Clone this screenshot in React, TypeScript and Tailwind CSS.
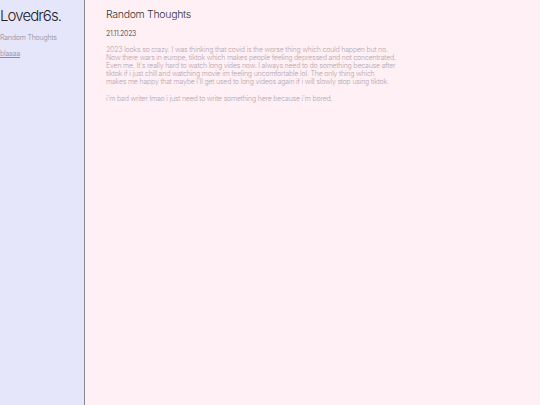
export default function App() {
  return (
    <div className="flex min-h-screen h-[405px] font-['Inter',sans-serif] font-light">
      <aside className="w-[85px] shrink-0 border-r border-[#8a8a8a] bg-[#e6e6fa]">
        <h1 className="mt-[7px] text-[15px] leading-[18px] tracking-[-0.9px] text-[#222]">Lovedr6s.</h1>
        <nav className="mt-[9px] flex flex-col gap-[8px] text-[7px] leading-[8px] tracking-[-0.2px] text-[#8d8d99]">
          <span>Random Thoughts</span>
          <span className="underline">blaaaa</span>
        </nav>
      </aside>
      <main className="flex-1 bg-[#fff0f5] pl-[21px] pt-[8px]">
        <h2 className="text-[10.5px] leading-[13px] tracking-[-0.3px] text-[#333]">Random Thoughts</h2>
        <div className="mt-[7.5px] text-[7px] leading-[9px] tracking-[-0.3px] text-[#333]">21.11.2023</div>
        <div className="mt-[8px] whitespace-nowrap text-[7px] leading-[8px] tracking-[-0.2px] text-[#b3a6ad]">
          <p>
            2023 looks so crazy. I was thinking that covid is the worse thing which could happen but no.
            <br />
            Now there wars in europe, tiktok which makes people feeling depressed and not concentrated.
            <br />
            Even me. It's really hard to watch long vides now. I always need to do something because after
            <br />
            tiktok if i just chill and watching movie im feeling uncomfortable lol. The only thing which
            <br />
            makes me happy that maybe I'll get used to long videos again if i will slowly stop using tiktok.
          </p>
          <p className="mt-[9px]">i'm bad writer lmao i just need to write something here because i'm bored.</p>
        </div>
      </main>
    </div>
  )
}
